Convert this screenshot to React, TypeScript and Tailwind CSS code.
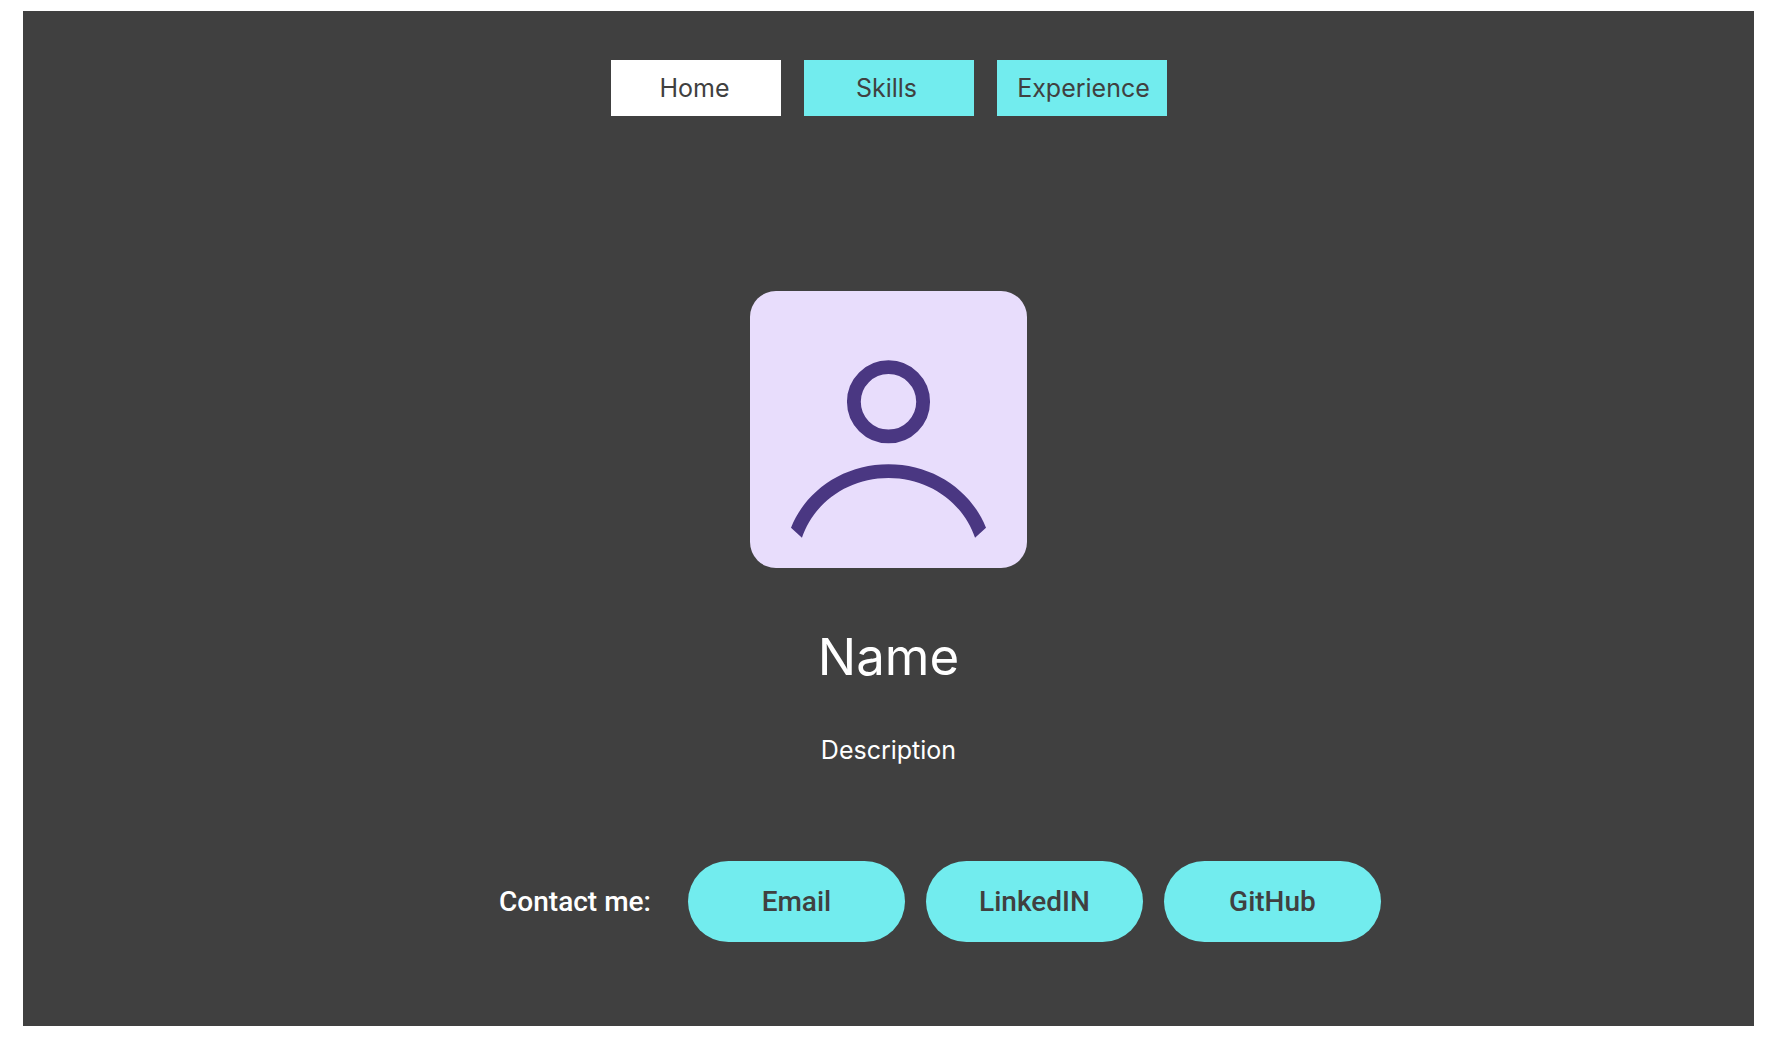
import React from 'react';

const tabs = [
  { label: 'Home', className: 'bg-white pr-0.5' },
  { label: 'Skills', className: 'bg-[#72ecee] pr-1' },
  { label: 'Experience', className: 'bg-[#72ecee] pl-1' },
];

const contacts = ['Email', 'LinkedIN', 'GitHub'];

function Avatar() {
  return (
    <svg
      viewBox="0 0 20 20"
      role="img"
      aria-label="Profile picture"
      className="mt-[175px] size-[277px] rounded-[26px] bg-[#e8ddfc]"
    >
      <circle cx="10" cy="8" r="2.5" fill="none" stroke="#4a3782" strokeWidth="1" />
      <path
        d="M2.96 17.09 C4.05 14.35 6.8 12.5 10 12.5 S15.95 14.35 17.04 17.09 L16.25 17.82 C15.4 15.3 12.95 13.5 10 13.5 S4.6 15.3 3.75 17.82 Z"
        fill="#4a3782"
      />
    </svg>
  );
}

export default function App() {
  return (
    <div className="bg-white pt-[11px] pr-[26px] pb-[30px] pl-[23px] font-['Inter',sans-serif]">
      <main className="flex flex-col items-center bg-[#404040] pt-[49px] pb-21 text-white">
        <nav className="flex gap-[23px]">
          {tabs.map((tab) => (
            <button
              key={tab.label}
              type="button"
              className={`h-14 w-[170px] pt-0.5 text-[25px] text-[#404040] ${tab.className}`}
            >
              {tab.label}
            </button>
          ))}
        </nav>
        <Avatar />
        <h1 className="mt-[57px] text-[51px] leading-16">Name</h1>
        <p className="mt-[45px] text-[25px] leading-8">Description</p>
        <div className="mt-[95px] flex items-center gap-[21px] pl-[103px] font-['Roboto',sans-serif] text-[28px] font-medium">
          <span className="mr-4">Contact me:</span>
          {contacts.map((label) => (
            <button
              key={label}
              type="button"
              className="h-[81px] w-[217px] rounded-full bg-[#72ecee] text-[#404040]"
            >
              {label}
            </button>
          ))}
        </div>
      </main>
    </div>
  );
}
